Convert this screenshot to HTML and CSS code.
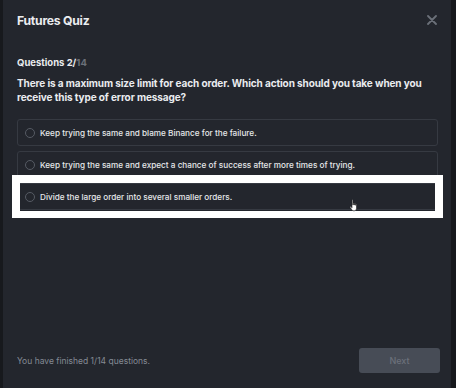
FILE: index.html
```html
<!DOCTYPE html>
<html>
<head>
<meta charset="utf-8">
<link rel="stylesheet" href="styles.css">
</head>
<body>
<div class="modal">
  <div class="header">
    <h1 class="title">Futures Quiz</h1>
    <svg class="close" width="10" height="10" viewBox="0 0 10 10"><path d="M1 1L9 9M9 1L1 9" stroke="#6b7079" stroke-width="1.8" stroke-linecap="round"/></svg>
  </div>
  <div class="counter">Questions 2/<span class="total">14</span></div>
  <p class="question">There is a maximum size limit for each order. Which action should you take when you receive this type of error message?</p>
  <div class="options">
    <div class="option"><span class="radio"></span><span>Keep trying the same and blame Binance for the failure.</span></div>
    <div class="option"><span class="radio"></span><span>Keep trying the same and expect a chance of success after more times of trying.</span></div>
    <div class="option selected"><span class="radio"></span><span>Divide the large order into several smaller orders.</span></div>
  </div>
  <div class="footer">
    <span class="progress">You have finished 1/14 questions.</span>
    <button class="next">Next</button>
  </div>
  <div class="highlight"></div>
  <svg class="cursor" width="10" height="13" viewBox="0 0 10 13"><path d="M3 1.2c0-.6.9-.6.9 0V6h.3V4.6c0-.6.9-.6.9 0V6h.3V5c0-.6.9-.6.9 0v1.2h.3v-.6c0-.6.9-.6.9 0v3.6c0 1.5-.9 2.6-2.3 2.6H4.6c-.8 0-1.300-.4-1.7-1L1.2 8.4c-.4-.5.3-1.1.8-.6L3 8.8z" fill="#fff" stroke="#222" stroke-width=".6"/></svg>
</div>
</body>
</html>
```

FILE: styles.css
```css
html, body {
  margin: 0;
  padding: 0;
  background: #17191d;
}
body {
  width: 456px;
  height: 388px;
  overflow: hidden;
  font-family: "Inter", "Noto Sans", sans-serif;
}
.modal {
  position: relative;
  margin-left: 3px;
  width: 448px;
  height: 388px;
  background: #23262d;
  box-sizing: border-box;
  padding: 0 13px 0 14px;
  display: flex;
  flex-direction: column;
}
.header {
  display: flex;
  justify-content: space-between;
  align-items: center;
  height: 38px;
  padding-top: 1px;
}
.title {
  margin: 0;
  font-size: 12.2px;
  font-weight: 700;
  color: #eaecef;
  letter-spacing: -0.25px;
}
.close {
  margin-right: 1px;
}
.counter {
  margin-top: 17px;
  font-size: 9.5px;
  font-weight: 700;
  color: #eaecef;
  line-height: 14px;
}
.total {
  color: #6b7079;
}
.question {
  margin: 6px 0 0;
  font-size: 10px;
  font-weight: 700;
  color: #eaecef;
  line-height: 14px;
  letter-spacing: -0.1px;
}
.options {
  margin-top: 15px;
  display: flex;
  flex-direction: column;
  gap: 5px;
}
.option {
  height: 27px;
  box-sizing: border-box;
  border: 1px solid #363a42;
  border-radius: 3px;
  display: flex;
  align-items: center;
  padding-left: 7px;
  gap: 5px;
  font-size: 8.2px;
  font-weight: 500;
  color: #e6e8ea;
}
.radio {
  width: 8px;
  height: 8px;
  border: 1px solid #565b64;
  border-radius: 50%;
  flex: none;
}
.footer {
  margin-top: auto;
  height: 40px;
  display: flex;
  justify-content: space-between;
  align-items: flex-start;
  box-sizing: border-box;
}
.progress {
  font-size: 8.5px;
  color: #848a94;
  margin-top: 8px;
}
.next {
  width: 81px;
  height: 25px;
  border: none;
  border-radius: 3px;
  background: #474c56;
  color: #6c717b;
  font-family: inherit;
  font-size: 9px;
  font-weight: 500;
  margin-right: -2px;
}
.highlight {
  position: absolute;
  left: 9px;
  top: 175px;
  width: 431px;
  height: 43px;
  box-sizing: border-box;
  border: 8px solid #fff;
  border-bottom-width: 7px;
}
.cursor {
  position: absolute;
  left: 346px;
  top: 199px;
}
```
